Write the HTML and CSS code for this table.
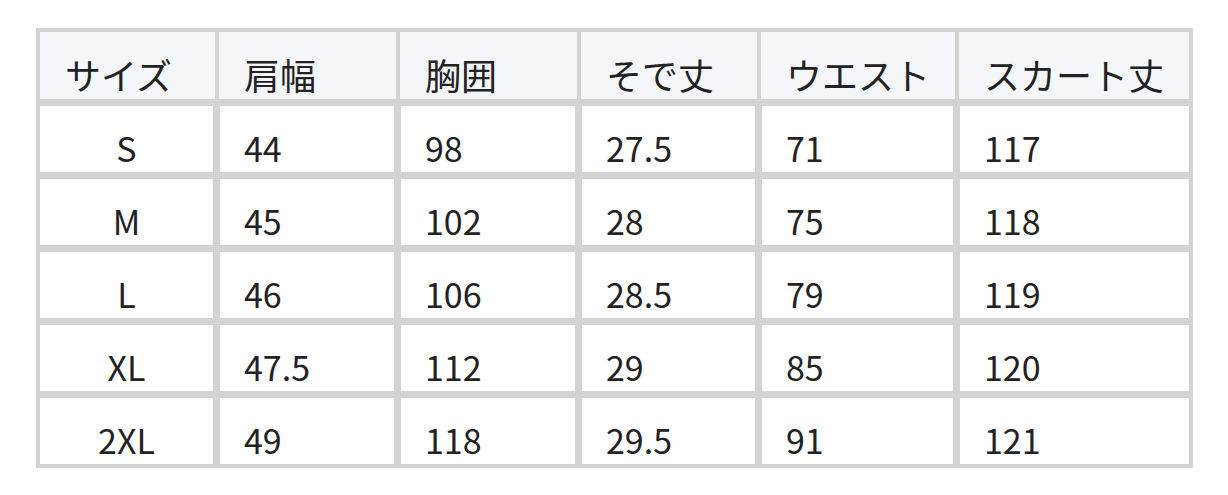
FILE: index.html
```html
<!DOCTYPE html>
<html lang="ja">
<head>
<meta charset="utf-8">
<title>サイズ表</title>
<link rel="stylesheet" href="styles.css">
</head>
<body>
<table class="size-table">
  <colgroup>
    <col class="c1"><col class="c2"><col class="c3"><col class="c4"><col class="c5"><col class="c6">
  </colgroup>
  <thead>
    <tr><th>サイズ</th><th>肩幅</th><th>胸囲</th><th>そで丈</th><th>ウエスト</th><th>スカート丈</th></tr>
  </thead>
  <tbody>
    <tr><td>S</td><td>44</td><td>98</td><td>27.5</td><td>71</td><td>117</td></tr>
    <tr><td>M</td><td>45</td><td>102</td><td>28</td><td>75</td><td>118</td></tr>
    <tr><td>L</td><td>46</td><td>106</td><td>28.5</td><td>79</td><td>119</td></tr>
    <tr><td>XL</td><td>47.5</td><td>112</td><td>29</td><td>85</td><td>120</td></tr>
    <tr><td>2XL</td><td>49</td><td>118</td><td>29.5</td><td>91</td><td>121</td></tr>
  </tbody>
</table>
</body>
</html>
```
FILE: styles.css
```css
html, body {
  margin: 0;
  background: #ffffff;
}
body {
  padding: 28px 0 0 36px;
  font-family: "Noto Sans CJK JP", "Noto Sans", sans-serif;
  color: #222222;
}
.size-table {
  table-layout: fixed;
  width: 1157px;
  border-collapse: separate;
  border-spacing: 0;
  border-top: 4px solid #d3d3d3;
  border-left: 4px solid #d3d3d3;
  font-size: 34px;
  line-height: 34px;
}
.c1 { width: 179px; }
.c2 { width: 181px; }
.c3 { width: 181px; }
.c4 { width: 180px; }
.c5 { width: 198px; }
.c6 { width: 234px; }
.size-table th {
  background: #f5f6fa;
  font-weight: normal;
  font-size: 36px;
  text-align: left;
  padding: 25px 20px 8px 25px;
  border-right: 4px solid #d3d3d3;
  border-bottom: 7px solid #d3d3d3;
  white-space: nowrap;
}
.size-table td {
  text-align: left;
  padding: 25px 24px 7px 24px;
  border-left: 1px solid #d3d3d3;
  border-right: 6px solid #d3d3d3;
  border-bottom: 7px solid #d3d3d3;
  white-space: nowrap;
}
.size-table td:first-child {
  border-left: 0;
  text-align: center;
  padding-left: 0;
  padding-right: 0;
}
.size-table td:last-child,
.size-table th:last-child {
  border-right: 4px solid #d3d3d3;
}
.size-table tbody tr:last-child td {
  border-bottom: 4px solid #d3d3d3;
}
```
